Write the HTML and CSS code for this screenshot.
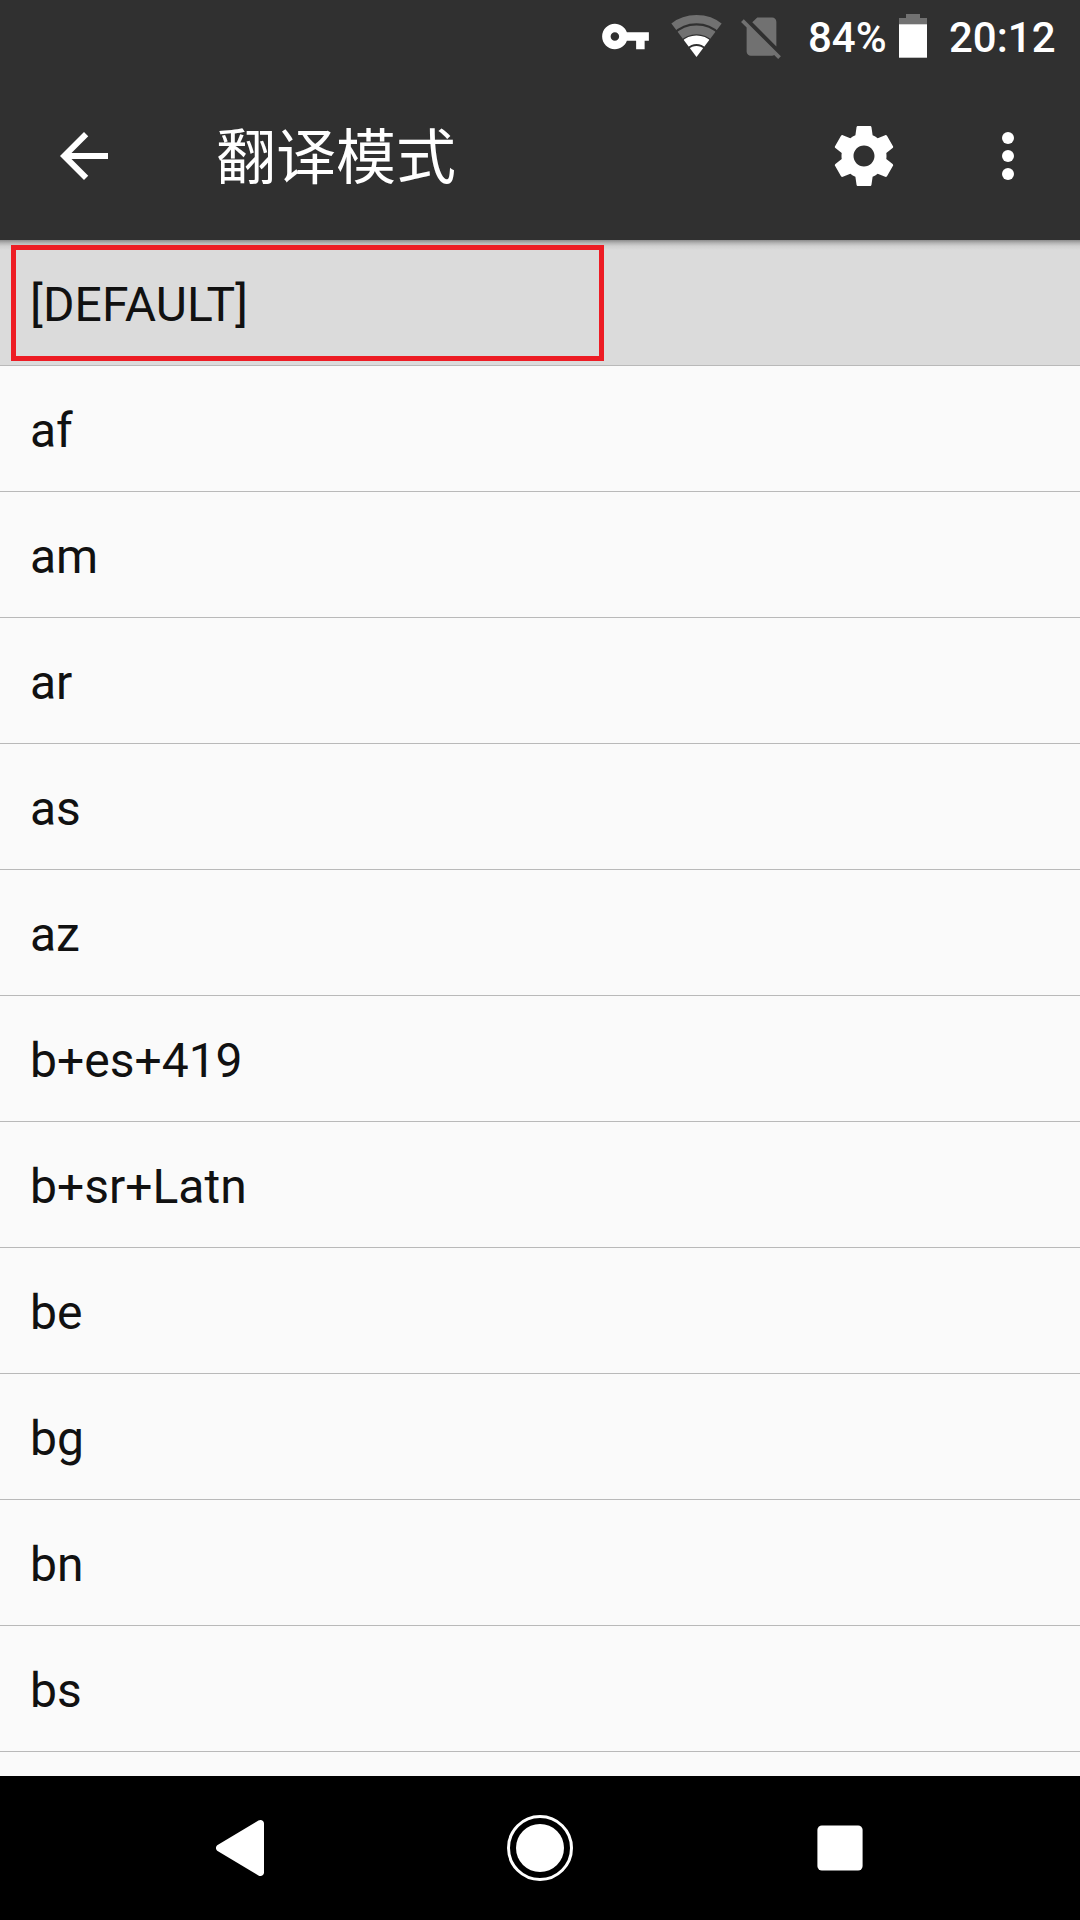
FILE: index.html
```html
<!DOCTYPE html>
<html lang="zh-CN">
<head>
<meta charset="utf-8">
<title>翻译模式</title>
<link rel="stylesheet" href="styles.css">
</head>
<body>
<div class="screen">
  <header class="header">
    <div class="status">
      <svg class="icon-key" viewBox="0 0 24 24"><path d="M12.65 10C11.83 7.67 9.61 6 7 6c-3.31 0-6 2.69-6 6s2.69 6 6 6c2.61 0 4.83-1.67 5.65-4H17v4h4v-4h2v-4H12.65zM7 14c-1.1 0-2-.9-2-2s.9-2 2-2 2 .9 2 2-.9 2-2 2z"/></svg>
      <svg class="icon-wifi" viewBox="0.5 0 52 44">
        <clipPath id="fan"><path d="M26 43L-7-1H59z"/></clipPath>
        <g clip-path="url(#fan)" fill="none">
          <circle class="dim" cx="26" cy="43" r="37.800" stroke-width="8.200"/>
          <circle class="dim" cx="26" cy="43" r="27.200" stroke-width="8.800"/>
          <circle class="lit" cx="26" cy="43" r="17.200" stroke-width="8.400"/>
          <circle cx="26" cy="43" r="11" fill="#fff"/>
        </g>
      </svg>
      <svg class="icon-sim" viewBox="0 0 24 24"><path d="M18.99 5c0-1.1-.89-2-1.99-2h-7L7.66 5.34 19 16.68 18.99 5zM3.65 3.88L2.38 5.15 5 7.77V19c0 1.1.9 2 2 2h10.01c.35 0 .67-.1.96-.26l1.88 1.88 1.27-1.27L3.65 3.88z"/></svg>
      <span class="percent">84%</span>
      <svg class="icon-battery" viewBox="0 0 28 44"><path fill="#717171" d="M7 0h14v4h7v7H0V4h7z"/><path d="M0 10.3h28v33.4H0z"/></svg>
      <span class="clock">20:12</span>
    </div>
    <div class="toolbar">
      <svg class="icon" viewBox="0 0 24 24"><path d="M20 11H7.83l5.59-5.59L12 4l-8 8 8 8 1.41-1.41L7.83 13H20v-2z"/></svg>
      <h1 class="title">翻译模式</h1>
      <svg class="icon" viewBox="0 0 24 24"><path d="M19.43 12.98c.04-.32.07-.64.07-.98s-.03-.66-.07-.98l2.11-1.65c.19-.15.24-.42.12-.64l-2-3.46c-.12-.22-.39-.3-.61-.22l-2.49 1c-.52-.4-1.08-.73-1.69-.98l-.38-2.65C14.46 2.18 14.25 2 14 2h-4c-.25 0-.46.18-.49.42l-.38 2.65c-.61.25-1.17.59-1.69.98l-2.49-1c-.23-.09-.49 0-.61.22l-2 3.46c-.13.22-.07.49.12.64l2.11 1.65c-.04.32-.07.65-.07.98s.03.66.07.98l-2.11 1.65c-.19.15-.24.42-.12.64l2 3.46c.12.22.39.3.61.22l2.49-1c.52.4 1.08.73 1.69.98l.38 2.65c.03.24.24.42.49.42h4c.25 0 .46-.18.49-.42l.38-2.65c.61-.25 1.17-.59 1.69-.98l2.49 1c.23.09.49 0 .61-.22l2-3.46c.12-.22.07-.49-.12-.64l-2.11-1.65zM12 15.5c-1.93 0-3.5-1.57-3.5-3.5s1.57-3.5 3.5-3.5 3.5 1.57 3.5 3.5-1.57 3.5-3.5 3.5z"/></svg>
      <svg class="icon icon-more" viewBox="0 0 24 24"><circle cx="12" cy="6" r="2"/><circle cx="12" cy="12" r="2"/><circle cx="12" cy="18" r="2"/></svg>
    </div>
  </header>
  <ul class="list">
    <li class="row selected">[DEFAULT]<span class="highlight"></span></li>
    <li class="row">af</li>
    <li class="row">am</li>
    <li class="row">ar</li>
    <li class="row">as</li>
    <li class="row">az</li>
    <li class="row">b+es+419</li>
    <li class="row">b+sr+Latn</li>
    <li class="row">be</li>
    <li class="row">bg</li>
    <li class="row">bn</li>
    <li class="row">bs</li>
  </ul>
  <nav class="navbar">
    <svg class="nav-back" viewBox="0 0 48 56"><path d="M42.4.6C45-.9 48 .7 48 3.6v48.8c0 2.900-3 4.500-5.600 3L2 31.300C-.7 29.700-.7 26.300 2 24.700z"/></svg>
    <svg class="nav-home" viewBox="0 0 66 66"><circle cx="33" cy="33" r="31.500" fill="none" stroke="#fff" stroke-width="3"/><circle cx="33" cy="33" r="24"/></svg>
    <svg class="nav-recent" viewBox="0 0 46 46"><rect x=".4" y=".4" width="45.200" height="45.200" rx="4.500"/></svg>
  </nav>
</div>
</body>
</html>
```
FILE: styles.css
```css
* { box-sizing: border-box; }

body {
  margin: 0;
  background: #fafafa;
  font-family: Roboto, "Noto Sans CJK SC", sans-serif;
}

svg { display: block; flex: none; fill: #fff; }

.screen {
  display: flex;
  flex-direction: column;
  width: 1080px;
  height: 1920px;
  overflow: hidden;
}

.header {
  flex: none;
  height: 240px;
  background: #303030;
  color: #fff;
}

.status {
  display: flex;
  align-items: center;
  justify-content: flex-end;
  height: 72px;
  padding-right: 24px;
  font-size: 42px;
  font-weight: 500;
  line-height: 72px;
}

.icon-key { width: 51px; height: 51px; margin-right: 20px; }
.icon-wifi { width: 52px; height: 44px; margin-right: 13px; }
.icon-sim { width: 51px; height: 51px; fill: #717171; }
.dim { stroke: #717171; }
.lit { stroke: #fff; }
.percent { width: 91px; margin-left: 21px; margin-top: 4px; }
.icon-battery { width: 28px; height: 44px; }
.clock { width: 107px; margin-left: 22px; margin-top: 4px; }

.toolbar {
  display: flex;
  align-items: center;
  height: 168px;
  padding: 0 36px 0 48px;
}

.icon { width: 72px; height: 72px; }
.icon-more { margin-left: 72px; }

.title {
  flex: 1;
  margin: 5px 0 0 96px;
  font-size: 60px;
  font-weight: 400;
  line-height: 72px;
}

.list {
  flex: 1;
  margin: 0;
  padding: 0;
  list-style: none;
}

.row {
  height: 126px;
  padding: 4px 30px 0;
  border-bottom: 1px solid #b9b9b9;
  color: #111;
  font-size: 48px;
  line-height: 121px;
}

.selected {
  position: relative;
  background: linear-gradient(#8c8c8c 0, #b4b4b4 3px, #d0d0d0 6px, #dbdbdb 10px);
  letter-spacing: 0.15px;
}

.highlight {
  position: absolute;
  top: 5px;
  left: 11px;
  width: 593px;
  height: 116px;
  border: 5px solid #ed1c24;
}

.navbar {
  display: flex;
  flex: none;
  align-items: center;
  height: 144px;
  padding-left: 216px;
  background: #000;
}

.nav-back { width: 48px; height: 56px; }
.nav-home { width: 66px; height: 66px; margin: 0 244px 0 243px; }
.nav-recent { width: 46px; height: 46px; }
```
